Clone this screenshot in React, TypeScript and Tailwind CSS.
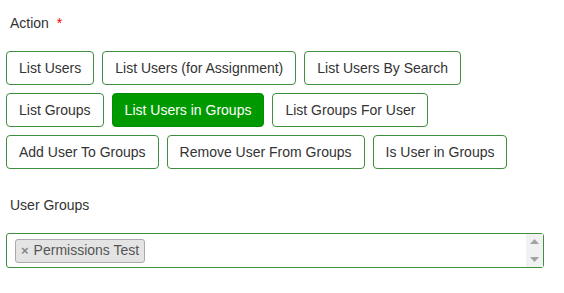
import { useState } from 'react';

const actions = [
  ['List Users', 'List Users (for Assignment)', 'List Users By Search'],
  ['List Groups', 'List Users in Groups', 'List Groups For User'],
  ['Add User To Groups', 'Remove User From Groups', 'Is User in Groups'],
];

export default function App() {
  const [active, setActive] = useState('List Users in Groups');

  return (
    <div className="w-[564px] h-[293px] bg-white text-[14px] text-[#333] font-['Liberation_Sans',Arial,sans-serif]">
      <div className="pl-[10px] pt-[13px] leading-[20px]">
        Action <span className="ml-[4px] text-[#e00]">*</span>
      </div>

      <div className="flex flex-col gap-[8px] pl-[6px] pt-[18px]">
        {actions.map((row, i) => (
          <div key={i} className="flex gap-[8px]">
            {row.map((label) => (
              <button
                key={label}
                onClick={() => setActive(label)}
                className={
                  label === active
                    ? 'h-[34px] px-[12px] rounded-[4px] border border-[#008f00] bg-[#009a00] text-white leading-[20px]'
                    : 'h-[34px] px-[12px] rounded-[4px] border border-[#3f8f3f] bg-white text-[#333] leading-[20px]'
                }
              >
                {label}
              </button>
            ))}
          </div>
        ))}
      </div>

      <div className="pl-[10px] pt-[26px] leading-[20px]">User Groups</div>

      <div className="ml-[6px] mt-[18px] w-[538px] h-[35px] flex rounded-[3px] border border-[#3f8f3f] bg-white">
        <div className="flex-1 flex items-center pl-[8px]">
          <div className="h-[24px] flex items-center gap-[5px] px-[5px] rounded-[3px] border border-[#aaa] bg-[#e4e4e4] text-[#555]">
            <span className="text-[#888] font-bold text-[13px] leading-none">×</span>
            <span>Permissions Test</span>
          </div>
        </div>
        <div className="w-[17px] flex flex-col items-center justify-between py-[5px] bg-[#f1f1f1]">
          <svg width="9" height="5" viewBox="0 0 9 5"><path d="M0 5 L4.5 0 L9 5 Z" fill="#a3a3a3" /></svg>
          <svg width="9" height="5" viewBox="0 0 9 5"><path d="M0 0 L4.5 5 L9 0 Z" fill="#a3a3a3" /></svg>
        </div>
      </div>
    </div>
  );
}
